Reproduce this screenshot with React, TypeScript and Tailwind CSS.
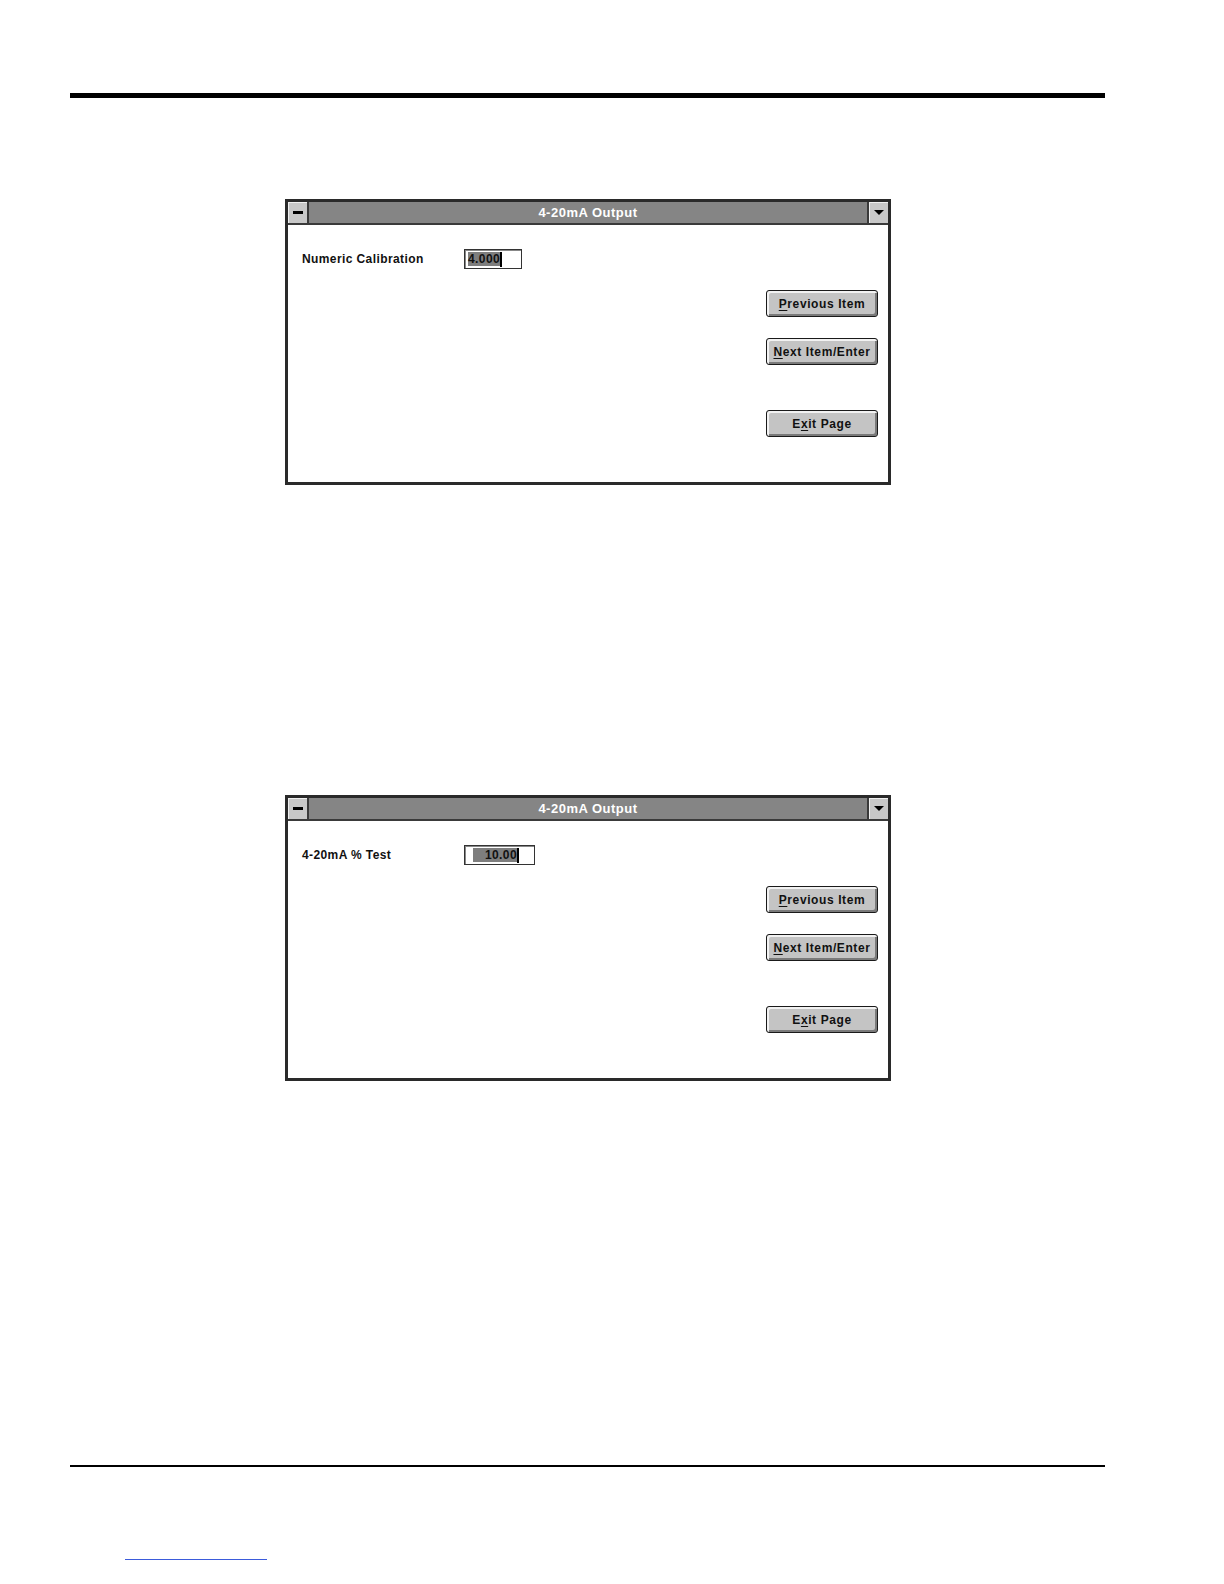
import React from "react";

const font = { fontFamily: '"Liberation Sans", Arial, sans-serif' };

function Btn({ hot, rest, className = "" }: { hot: string; rest: string; className?: string }) {
  return (
    <div
      className={`w-[112px] h-[27px] rounded-[3px] border border-[#1a1a1a] bg-[#c4c4c4] shadow-[inset_2px_2px_0_#f2f2f2,inset_-2px_-2px_0_#7a7a7a] flex items-center justify-center text-[12px] font-bold tracking-[0.6px] text-[#111] ${className}`}
    >
      <span>
        <span className="underline underline-offset-2">{hot}</span>
        {rest}
      </span>
    </div>
  );
}

function Window({
  label,
  value,
  inputW,
  right,
}: {
  label: string;
  value: string;
  inputW: string;
  right?: boolean;
}) {
  return (
    <div className="ml-[285px] w-[606px] h-[286px] border-[3px] border-[#2a2a2a] bg-white flex flex-col" style={font}>
      {/* title bar */}
      <div className="h-[23px] flex items-stretch border-b-2 border-[#3a3a3a] bg-[#858585]">
        <div className="w-[21px] bg-[#c8c8c8] border-r-2 border-[#3a3a3a] shadow-[inset_1px_1px_0_#f0f0f0] flex items-center justify-center">
          <div className="w-[10px] h-[3px] bg-black" />
        </div>
        <div className="flex-1 flex items-center justify-center text-white text-[13px] font-bold tracking-[0.5px]">
          4-20mA Output
        </div>
        <div className="w-[21px] bg-[#c8c8c8] border-l-2 border-[#3a3a3a] shadow-[inset_1px_1px_0_#f0f0f0] flex items-center justify-center">
          <div className="w-0 h-0 border-l-[5px] border-r-[5px] border-t-[5px] border-l-transparent border-r-transparent border-t-black" />
        </div>
      </div>
      {/* body */}
      <div className="relative flex-1">
        <div className="flex items-center mt-[24px] ml-[14px]">
          <div className="w-[162px] text-[12px] font-bold tracking-[0.4px] text-[#111]">{label}</div>
          <div
            className={`${inputW} h-[20px] border border-[#333] shadow-[inset_1px_1px_0_#888] flex items-center px-[3px] ${right ? "justify-end" : ""}`}
          >
            <div className={`flex items-center ${right ? "mr-[12px]" : ""}`}>
              <span className={`bg-[#7e7e7e] text-[#111] text-[12px] font-bold leading-[14px] tracking-[0.4px] ${right ? "pl-[12px]" : ""}`}>
                {value}
              </span>
              <span className="w-[2px] h-[15px] bg-black" />
            </div>
          </div>
        </div>
        <div className="absolute right-[10px] top-[65px] flex flex-col">
          <Btn hot="P" rest="revious Item" />
          <Btn hot="N" rest="ext Item/Enter" className="mt-[21px]" />
          <Btn hot="" rest="" className="hidden" />
          <div className="mt-[45px] w-[112px] h-[27px] rounded-[3px] border border-[#1a1a1a] bg-[#c4c4c4] shadow-[inset_2px_2px_0_#f2f2f2,inset_-2px_-2px_0_#7a7a7a] flex items-center justify-center text-[12px] font-bold tracking-[0.6px] text-[#111]">
            <span>
              E<span className="underline underline-offset-2">x</span>it Page
            </span>
          </div>
        </div>
      </div>
    </div>
  );
}

export default function App() {
  return (
    <div className="w-[1224px] h-[1584px] bg-white overflow-hidden">
      <div className="pt-[93px]">
        <div className="ml-[70px] w-[1035px] h-[5px] bg-black" />
      </div>
      <div className="mt-[101px]">
        <Window label="Numeric Calibration" value="4.000" inputW="w-[58px]" />
      </div>
      <div className="mt-[310px]">
        <Window label="4-20mA % Test" value="10.00" inputW="w-[71px]" right />
      </div>
      <div className="mt-[384px] ml-[70px] w-[1035px] h-[2px] bg-black" />
      <div className="mt-[92px] ml-[125px] w-[142px] h-px bg-[#3b5bdb]" />
    </div>
  );
}
